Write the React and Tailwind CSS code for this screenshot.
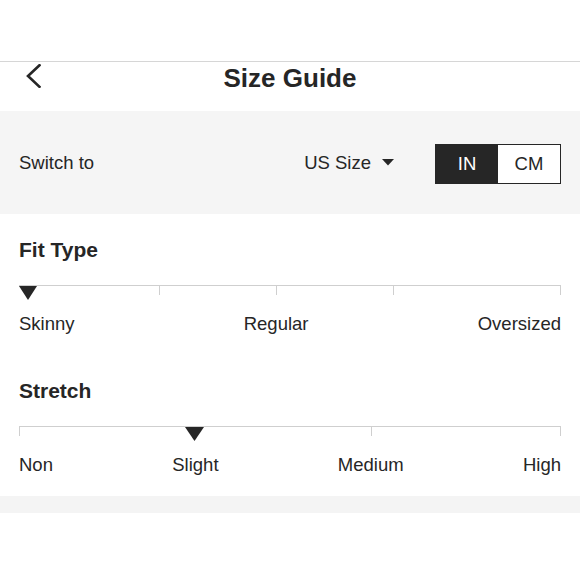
export default function App() {
  const font = { fontFamily: '"Liberation Sans", Arial, Helvetica, sans-serif' };
  return (
    <div className="w-[580px] h-[580px] bg-white text-[#262626]" style={font}>
      <div className="h-[61px] bg-white" />
      <div className="h-px bg-[#d6d6d6]" />
      {/* Header */}
      <div className="h-[49px] grid grid-cols-[1fr_auto_1fr] items-start">
        <div className="pl-[26px] pt-[2px]">
          <svg width="15" height="24" viewBox="0 0 15 24" fill="none">
            <polyline points="13.5,1.2 2,12 13.5,22.8" stroke="#262626" strokeWidth="2.6" strokeLinecap="square" strokeLinejoin="miter" />
          </svg>
        </div>
        <div className="text-[26px] leading-[32px] font-bold">Size Guide</div>
        <div />
      </div>
      {/* Switch band */}
      <div className="h-[103px] bg-[#f5f5f5] flex items-center px-[19px]">
        <div className="text-[18.5px] leading-[22px] flex-1">Switch to</div>
        <div className="flex items-center mr-[41px]">
          <span className="text-[18.5px] leading-[22px]">US Size</span>
          <svg className="ml-[11px]" width="12" height="7" viewBox="0 0 12 7">
            <polygon points="0,0 12,0 6,6.5" fill="#262626" />
          </svg>
        </div>
        <div className="flex h-[40px] mt-[2px] border border-[#262626]">
          <div className="w-[62px] bg-[#262626] text-white flex items-center justify-center text-[18.5px]">IN</div>
          <div className="w-[62px] bg-white flex items-center justify-center text-[18.5px]">CM</div>
        </div>
      </div>
      {/* Scales */}
      <div className="bg-white px-[19px] pt-[24px] pb-[20px] flex flex-col gap-[44px]">
        <div>
          <div className="text-[21px] leading-[24px] font-bold">Fit Type</div>
          <div className="relative mt-[23px] h-px bg-[#cfcfcf]">
            <div className="absolute top-0 left-[140px] w-px h-[10px] bg-[#cfcfcf]" />
            <div className="absolute top-0 left-[257px] w-px h-[10px] bg-[#cfcfcf]" />
            <div className="absolute top-0 left-[374px] w-px h-[10px] bg-[#cfcfcf]" />
            <div className="absolute top-0 left-[541px] w-px h-[10px] bg-[#cfcfcf]" />
            <svg className="absolute top-[1px] left-0" width="18" height="14" viewBox="0 0 18 14">
              <polygon points="0,0 18,0 9,14" fill="#262626" />
            </svg>
          </div>
          <div className="mt-[27px] flex justify-between text-[18.5px] leading-[22px]">
            <span>Skinny</span>
            <span>Regular</span>
            <span>Oversized</span>
          </div>
        </div>
        <div>
          <div className="text-[21px] leading-[24px] font-bold">Stretch</div>
          <div className="relative mt-[23px] h-px bg-[#cfcfcf]">
            <div className="absolute top-0 left-0 w-px h-[10px] bg-[#cfcfcf]" />
            <div className="absolute top-0 left-[352px] w-px h-[10px] bg-[#cfcfcf]" />
            <div className="absolute top-0 left-[541px] w-px h-[10px] bg-[#cfcfcf]" />
            <svg className="absolute top-[1px] left-[166px]" width="19" height="14" viewBox="0 0 19 14">
              <polygon points="0,0 19,0 9.5,14" fill="#262626" />
            </svg>
          </div>
          <div className="mt-[27px] flex justify-between text-[18.5px] leading-[22px]">
            <span>Non</span>
            <span>Slight</span>
            <span>Medium</span>
            <span>High</span>
          </div>
        </div>
      </div>
      <div className="h-[17px] bg-[#f4f4f4]" />
    </div>
  );
}
